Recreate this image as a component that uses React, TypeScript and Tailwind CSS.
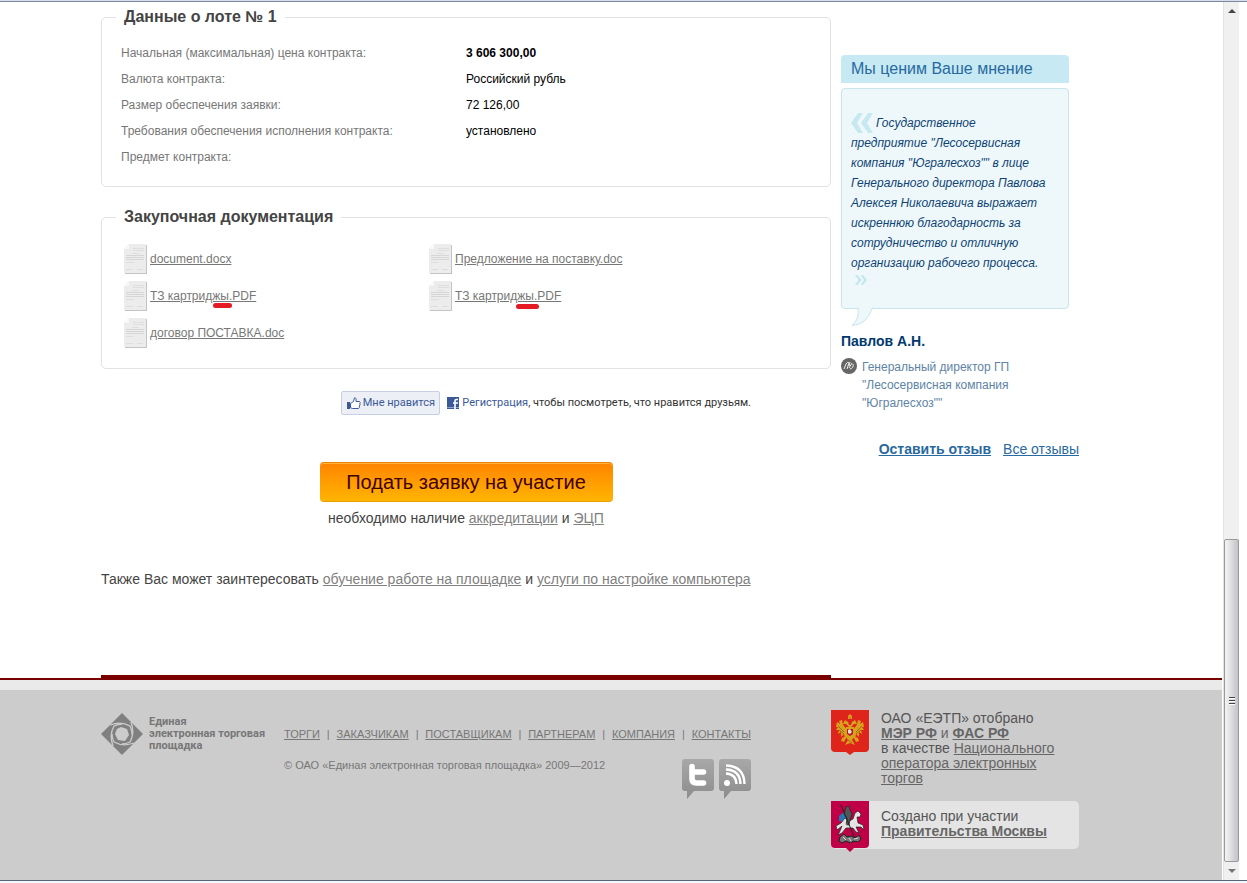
import React from "react";

const lotRows = [
  { label: "Начальная (максимальная) цена контракта:", value: "3 606 300,00", bold: true },
  { label: "Валюта контракта:", value: "Российский рубль" },
  { label: "Размер обеспечения заявки:", value: "72 126,00" },
  { label: "Требования обеспечения исполнения контракта:", value: "установлено" },
  { label: "Предмет контракта:", value: "" },
];

const documents = [
  { name: "document.docx" },
  { name: "Предложение на поставку.doc" },
  { name: "ТЗ картриджы.PDF", mark: "left-[63px] top-[22px] w-[19px]" },
  { name: "ТЗ картриджы.PDF", mark: "left-[61px] top-[23px] w-[23px]" },
  { name: "договор ПОСТАВКА.doc" },
];

const footerLinks = ["ТОРГИ", "ЗАКАЗЧИКАМ", "ПОСТАВЩИКАМ", "ПАРТНЕРАМ", "КОМПАНИЯ", "КОНТАКТЫ"];

const DocIcon = () => (
  <svg width="23" height="30" viewBox="0 0 23 30" className="shrink-0">
    <path d="M5 1H23V30H1V5Z" fill="#c4c4c4" />
    <path d="M5 0H22V29H0V5Z" fill="#ececec" />
    <path d="M0 5L5 0V5Z" fill="#f8f8f8" />
    <path d="M9 4.5H20M9 6.5H20M8 9.5H15M2 18.5H10M2 25.5H9M13 25.5H19" stroke="#dedede" />
    <path d="M2 11.5H20M2 13.5H20M2 15.5H20" stroke="#d6d6d6" />
  </svg>
);

const Panel = ({ title, className, children }: { title: string; className: string; children: React.ReactNode }) => (
  <fieldset className={`min-w-0 rounded-[5px] border border-[#e2e2e2] ${className}`}>
    <legend className="ml-3.5 px-2 text-base leading-6 font-bold text-[#444]">{title}</legend>
    {children}
  </fieldset>
);

const Logo = () => (
  <svg width="42" height="42" viewBox="0 0 42 42" className="shrink-0">
    <path d="M21 0L42 21L21 42L0 21Z" fill="#808080" />
    <path d="M20 14L26 16L28 22L24 28L17 27L14 21L16 16Z" fill="#ccc" />
    <g fill="none" stroke="#ccc" strokeWidth="1.3">
      <path d="M9 12Q20 8 29 13Q31 17 31 21" />
      <path d="M9 12Q20 8 29 13Q31 17 31 21" transform="rotate(90 21 21)" />
      <path d="M9 12Q20 8 29 13Q31 17 31 21" transform="rotate(180 21 21)" />
      <path d="M9 12Q20 8 29 13Q31 17 31 21" transform="rotate(270 21 21)" />
    </g>
  </svg>
);

const Bubble = ({ id, children }: { id: string; children: React.ReactNode }) => (
  <svg width="32" height="40" viewBox="0 0 32 40">
    <defs>
      <linearGradient id={id} x1="0" y1="0" x2="0" y2="1">
        <stop offset="0" stopColor="#a8a8a8" />
        <stop offset="1" stopColor="#8c8c8c" />
      </linearGradient>
    </defs>
    <path d="M3 0H29Q32 0 32 3V29Q32 32 29 32H12L5 40V32H3Q0 32 0 29V3Q0 0 3 0Z" fill={`url(#${id})`} />
    {children}
  </svg>
);

const RussiaEmblem = () => (
  <svg width="38" height="45" viewBox="0 0 38 45" className="shrink-0">
    <path d="M0 0H38V38Q38 42 34 42H23L19 45L15 42H4Q0 42 0 38Z" fill="#df251b" />
    <g fill="#d9a21c">
      <path d="M17 19Q12 18 11 10L8 11L9 14L6 12L5 17L7 17L5 20L8 20L7 24L10 22L10 27L13 24L14 29L17 26Z" />
      <path d="M21 19Q26 18 27 10L30 11L29 14L32 12L33 17L31 17L33 20L30 20L31 24L28 22L28 27L25 24L24 29L21 26Z" />
      <path d="M18 17L15 14L12 14L14 10L17 12L18 15H20L21 12L24 10L26 14L23 14L20 17Z" />
      <path d="M17 6L19 4L21 6V9H17ZM15 17H23V27L21 30L24 35L19 33L14 35L17 30L15 27Z" />
      <path d="M11 28L16 26L13 32L10 31ZM27 28L22 26L25 32L28 31Z" />
    </g>
    <path d="M7 16L13 22M8 20L13 24M31 16L25 22M30 20L25 24M17 30L21 33M18 8H20" stroke="#87531a" strokeWidth="0.7" />
    <path d="M16 19H22V24L19 26L16 24Z" fill="#b91922" />
    <path d="M17 20L19 19L21 22L19 24L17 23Z" fill="#e9dcd6" />
  </svg>
);

const MoscowEmblem = () => (
  <svg width="38" height="51" viewBox="0 0 38 51" className="shrink-0">
    <path d="M0 0H38V43Q38 47 34 47H23L19 51L15 47H4Q0 47 0 43Z" fill="#c00046" />
    <path d="M8 15L13 11L17 17L14 21L8 20Z" fill="#2878b4" />
    <path
      d="M14 17L18 20L22 18L24 12L27 10L30 13L29 16L26 16L27 22L32 24L33 29L30 26L25 26L28 32L25 31L22 27L15 27L11 32L7 34L9 30L11 25L6 29L5 25L10 22Z"
      fill="#e6e6e6"
      stroke="#222"
      strokeWidth="0.7"
    />
    <path d="M15 6L18 5L19 9L21 13L19 19L18 24L15 24L16 17L13 13Z" fill="#555" stroke="#222" strokeWidth="0.7" />
    <path d="M10 4L24 38" stroke="#222" />
    <path
      d="M9 36L13 33L16 36L20 35L24 37L28 34L30 38L27 41L22 40L20 42L15 40L11 42L8 40Z"
      fill="#777"
      stroke="#222"
    />
    <path d="M12 36L15 39M18 37L20 40M23 38L27 37M12 20L17 26M23 22L26 25" stroke="#ddd" />
  </svg>
);

const Feedback = () => (
  <aside className="w-[238px] shrink-0 pt-[53px]">
    <div className="mr-2.5">
      <h2 className="rounded-t-[4px] bg-[#c6e9f4] px-2.5 text-base leading-7 text-[#28699f]">Мы ценим Ваше мнение</h2>
      <blockquote className="relative mt-[5px] rounded-[4px] border border-[#c6e6ec] bg-[#eef8fb] px-[9px] pt-6 pb-[15px] text-xs leading-5 text-[#0f4374] italic">
        <svg width="23" height="20" viewBox="0 0 23 20" className="mr-0.5 inline-block align-top">
          <path d="M7 0H12L6 10L12 20H7L0 10ZM17 0H22L16 10L22 20H17L10 10Z" fill="#c6e9f1" />
        </svg>
        Государственное
        <br />
        предприятие "Лесосервисная компания "Югралесхоз"" в лице Генерального директора Павлова Алексея Николаевича
        выражает искреннюю благодарность за сотрудничество и отличную организацию рабочего процесса.
        <svg width="13" height="20" viewBox="0 0 13 20" className="ml-1 block">
          <path d="M0 2H2.5L6.5 7L2.5 12H0L3.5 7ZM5.5 2H8L12 7L8 12H5.5L9 7Z" fill="#c6e6ee" />
        </svg>
        <svg width="22" height="20" viewBox="0 0 22 20" className="absolute top-[218px] left-2.5">
          <path d="M6 0Q8 12 0 18.5Q15 18 20.5 0Z" fill="#eef8fb" />
          <path d="M6 0.5Q8 12 0 18.5Q15 18 20.5 0.5" fill="none" stroke="#c6e6ec" />
        </svg>
      </blockquote>
      <p className="mt-[22px] text-sm leading-5 font-bold text-[#003a70]">Павлов А.Н.</p>
      <div className="mt-[7px] flex gap-[5px]">
        <svg width="16" height="16" viewBox="0 0 16 16" className="shrink-0">
          <circle cx="8" cy="8" r="8" fill="#666" />
          <path d="M3 11L5 6Q7 3 8 5L6 11M8 10L11 5M9 11Q13 10 12 6M9 4L8 8" fill="none" stroke="#eee" />
        </svg>
        <p className="text-xs leading-[18px] text-[#5d83a5]">Генеральный директор ГП "Лесосервисная компания "Югралесхоз""</p>
      </div>
    </div>
    <div className="mt-[27px] flex justify-end gap-3 text-sm leading-5 whitespace-nowrap text-[#28699f]">
      <a href="#review" className="font-bold underline">Оставить отзыв</a>
      <a href="#reviews" className="underline">Все отзывы</a>
    </div>
  </aside>
);

const Footer = () => (
  <footer className="flex grow border-t-10 border-[#eaeaea] bg-[#ccc] pt-5 pr-[143px] pl-[101px] text-[#777]">
    <div className="flex min-w-0 flex-1 items-start">
      <div className="mt-[3px] flex w-[183px] shrink-0 gap-1.5">
        <Logo />
        <p className="pt-[3px] font-[Roboto,sans-serif] text-[11px] leading-3 font-bold whitespace-nowrap">
          Единая
          <br />
          электронная торговая
          <br />
          площадка
        </p>
      </div>
      <div className="w-[467px] pt-4">
        <nav className="flex justify-between text-[11px] leading-4 whitespace-nowrap">
          {footerLinks.map((link, i) => (
            <React.Fragment key={link}>
              {i > 0 && <span>|</span>}
              <a href="#menu" className="underline">
                {link}
              </a>
            </React.Fragment>
          ))}
        </nav>
        <div className="mt-[15px] flex justify-between">
          <p className="text-[11px] leading-4">© ОАО «Единая электронная торговая площадка» 2009—2012</p>
          <div className="flex gap-[5px] pt-0.5">
            <a href="#twitter" aria-label="Twitter">
              <Bubble id="twitter">
                <path
                  d="M10 7.5V19.5Q10 24 14.5 24H21.5M10 13H21.5"
                  fill="none"
                  stroke="#fff"
                  strokeWidth="5.6"
                  strokeLinecap="round"
                />
              </Bubble>
            </a>
            <a href="#rss" aria-label="RSS">
              <Bubble id="rss">
                <circle cx="8" cy="24" r="3" fill="#fff" />
                <path d="M7 14.5Q17 15 17.5 25M7 10.5Q21 11 21.5 25M7 6.5Q25 7 25.5 25" fill="none" stroke="#fff" strokeWidth="2.4" />
              </Bubble>
            </a>
          </div>
        </div>
      </div>
    </div>
    <div className="w-[248px] shrink-0 text-sm leading-[15px] text-[#555]">
      <div className="flex gap-3">
        <RussiaEmblem />
        <p className="pt-px text-[#666]">
          <span className="text-[#555]">ОАО «ЕЭТП» отобрано</span>
          <br />
          <a href="#mer" className="font-bold underline">МЭР РФ</a> и <a href="#fas" className="font-bold underline">ФАС РФ</a>
          <br />
          <span className="text-[#555]">в качестве</span>{" "}
          <a href="#operator" className="underline">Национального оператора электронных торгов</a>
        </p>
      </div>
      <div className="mt-[15px] flex h-12 gap-3 rounded-[5px] bg-[#e4e4e4]">
        <MoscowEmblem />
        <p className="pt-2">
          Создано при участии
          <br />
          <a href="#moscow" className="font-bold text-[#666] underline">Правительства Москвы</a>
        </p>
      </div>
    </div>
  </footer>
);

const Scrollbar = () => (
  <div className="ml-px flex w-4 shrink-0 flex-col border-l border-[#e3e3e3] bg-[#f0f0f0]">
    <button type="button" aria-label="Вверх" className="flex h-[17px] items-center justify-center">
      <svg width="8" height="4" viewBox="0 0 8 4">
        <path d="M4 0L8 4H0Z" fill="#444" />
      </svg>
    </button>
    <div className="flex flex-1 flex-col justify-end">
      <div className="flex h-[323px] flex-col items-center justify-center gap-px rounded-[2px] border border-[#999] bg-linear-to-r from-[#f4f4f4] via-[#dcdce0] to-[#c4c4c8]">
        <span className="h-0.5 w-1.5 border-t border-[#444] bg-white" />
        <span className="h-0.5 w-1.5 border-t border-[#444] bg-white" />
        <span className="h-0.5 w-1.5 border-t border-[#444] bg-white" />
      </div>
    </div>
    <button type="button" aria-label="Вниз" className="flex h-[18px] items-center justify-center">
      <svg width="8" height="4" viewBox="0 0 8 4">
        <path d="M4 4L8 0H0Z" fill="#777" />
      </svg>
    </button>
  </div>
);

const App: React.FC = () => {
  return (
    <div className="flex min-h-screen flex-col bg-white pr-2 font-['Liberation_Sans',Arial,sans-serif]">
      <div className="-mr-2 h-0.5 border-b border-[#8088a0] bg-[#d5dfec]" />
      <div className="flex grow">
        <div className="flex min-w-0 flex-1 flex-col">
          <div className="flex gap-2.5 pr-[143px] pl-[101px]">
            <main className="min-w-0 flex-1 pt-[3px]">
              <Panel title="Данные о лоте № 1" className="px-0 pt-[11px] pb-4">
                <table className="ml-[19px] text-xs">
                  <tbody>
                    {lotRows.map((row) => (
                      <tr key={row.label} className="h-[26px]">
                        <th scope="row" className="w-[345px] p-0 text-left font-normal text-[#777]">
                          {row.label}
                        </th>
                        <td className={row.bold ? "p-0 font-bold text-black" : "p-0 text-black"}>{row.value}</td>
                      </tr>
                    ))}
                  </tbody>
                </table>
              </Panel>

              <Panel title="Закупочная документация" className="mt-[18px] pt-[15px] pb-5">
                <ul className="ml-[22px] grid grid-cols-[305px_1fr] gap-y-[7px] text-xs">
                  {documents.map((doc, i) => (
                    <li key={i} className="flex h-[30px] items-center gap-[3px]">
                      <DocIcon />
                      <span className="relative flex h-[30px] items-center">
                        <a href="#document" className="text-[#777] underline">
                          {doc.name}
                        </a>
                        {doc.mark && <span className={`absolute h-[5px] rounded-full bg-[#e41b23] ${doc.mark}`} />}
                      </span>
                    </li>
                  ))}
                </ul>
              </Panel>

              <div className="mt-[22px] flex items-center justify-end gap-[7px] pr-20 font-[Roboto,Tahoma,sans-serif] text-[11px] whitespace-nowrap text-[#333]">
                <button
                  type="button"
                  className="flex h-6 w-[99px] items-center justify-center gap-0.5 rounded-[2px] border border-[#c5cee3] bg-[#eceff6] text-[#3b5998]"
                >
                  <svg width="14" height="13" viewBox="0 0 14 13" className="shrink-0">
                    <path d="M0 5H3V12H0Z" fill="#3b5998" />
                    <path
                      d="M3.5 6.5L6.5 4.5L7.5 0.8Q9.5 0.5 9 4.5H12.5Q13.8 5.5 12.8 6.8Q13.5 8 12.4 9Q12.8 10.5 11.5 11.5H5.5L3.5 10.8Z"
                      fill="#fff"
                      stroke="#3b5998"
                    />
                  </svg>
                  Мне нравится
                </button>
                <svg width="12" height="12" viewBox="0 0 12 12" className="shrink-0">
                  <path d="M0 0H12V12H0Z" fill="#3b5998" />
                  <path d="M0 10.5H12" stroke="#8da0c8" />
                  <path d="M11 2.5H9.5Q8 2.5 8 4V12M6 6H11" fill="none" stroke="#fff" strokeWidth="1.6" />
                </svg>
                <p className="-ml-1">
                  <a href="#register" className="text-[#3b5998]">Регистрация</a>, чтобы посмотреть, что нравится друзьям.
                </p>
              </div>

              <div className="mt-[47px] text-center">
                <button
                  type="button"
                  className="h-10 w-[293px] rounded-[4px] border-y border-t-[#f08000] border-b-[#e8a200] bg-linear-to-b from-[#ff8400] to-[#ffb400] text-xl text-[#400000] shadow-[inset_0_1px_0_#ffb43c]"
                >
                  Подать заявку на участие
                </button>
                <p className="mt-1.5 text-sm leading-5 text-[#444]">
                  необходимо наличие <a href="#accreditation" className="text-[#808080] underline">аккредитации</a> и{" "}
                  <a href="#signature" className="text-[#808080] underline">ЭЦП</a>
                </p>
              </div>

              <p className="mt-[41px] mb-[86px] text-sm leading-5 text-[#444]">
                Также Вас может заинтересовать{" "}
                <a href="#training" className="text-[#808080] underline">обучение работе на площадке</a> и{" "}
                <a href="#setup" className="text-[#808080] underline">услуги по настройке компьютера</a>
              </p>
              <div className="h-[3px] bg-[#7a0000]" />
            </main>
            <Feedback />
          </div>
          <div className="h-0.5 bg-[#7a0000]" />
          <Footer />
        </div>
        <Scrollbar />
      </div>
      <div className="-mr-2 h-[3px] border-t border-[#5a6478] bg-[#f2f8fc]" />
    </div>
  );
};

export default App;
